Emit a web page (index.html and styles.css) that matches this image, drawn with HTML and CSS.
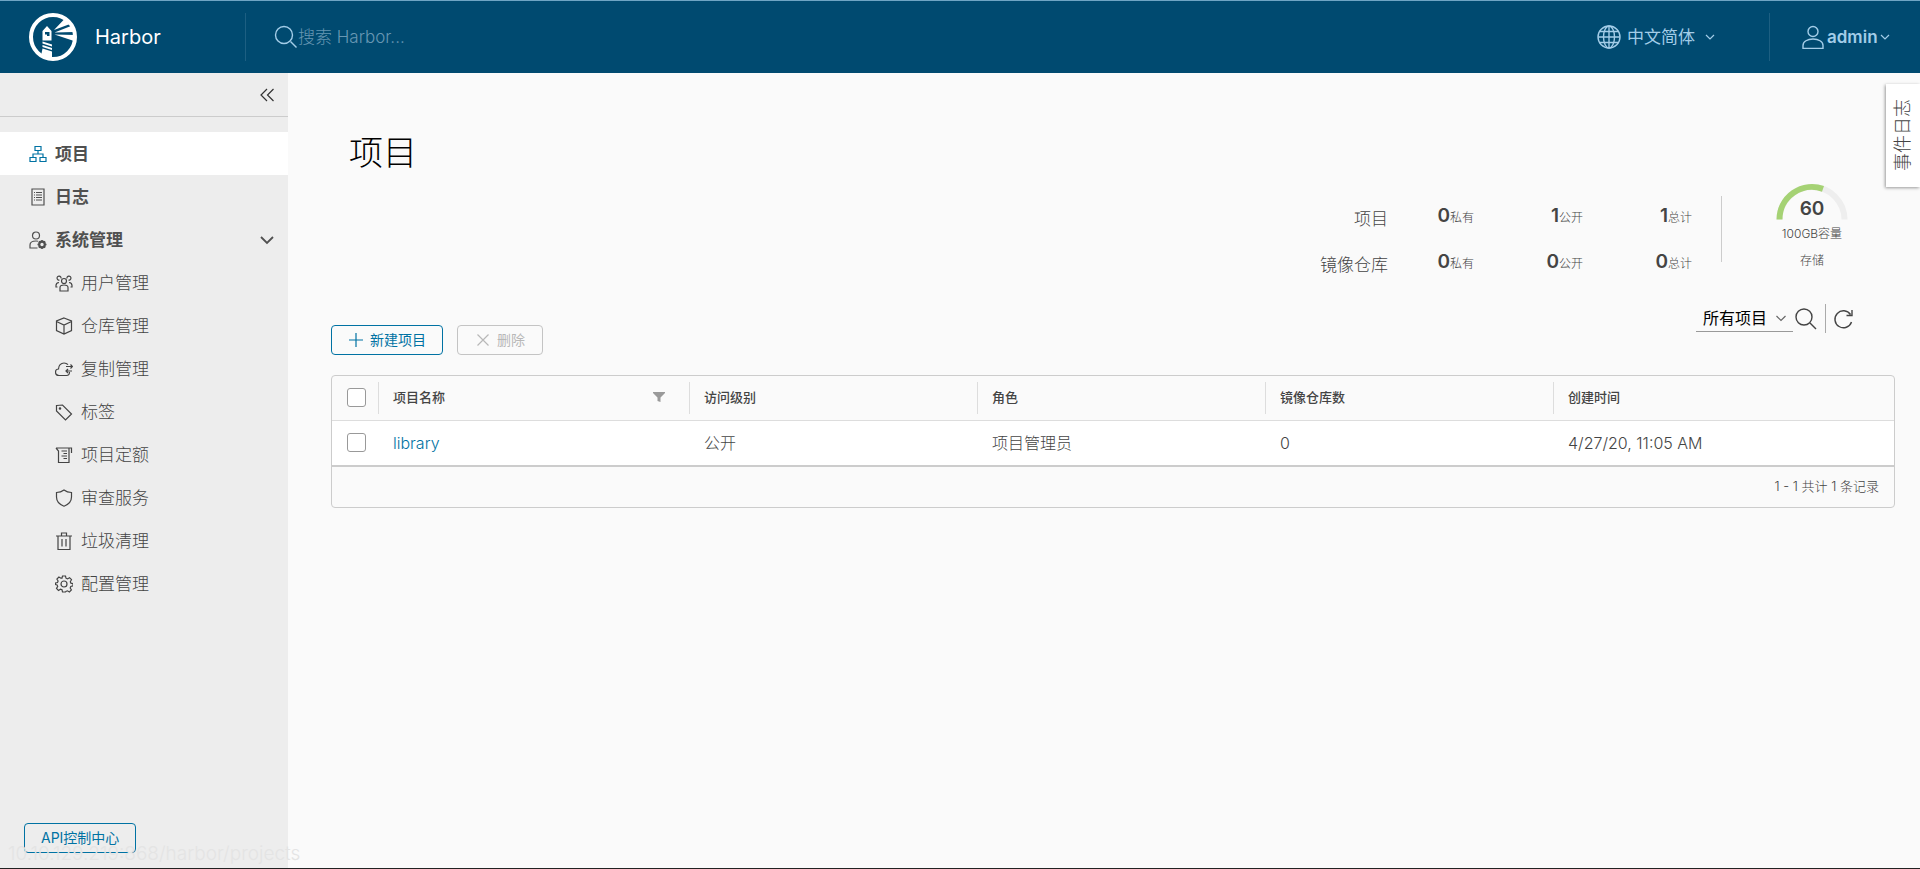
FILE: index.html
```html
<!DOCTYPE html>
<html lang="zh-CN">
<head>
<meta charset="utf-8">
<title>Harbor</title>
<link rel="stylesheet" href="styles.css">
</head>
<body>
<header class="topbar">
  <a class="brand" href="#">
    <svg class="logo" viewBox="0 0 48 48" aria-hidden="true">
      <circle cx="24" cy="24" r="22" fill="none" stroke="#fff" stroke-width="4"/>
      <path fill="#fff" d="M13.500 18l4.500-5 4.500 5v9.500h-9zM13.500 28.500l9.500 3v2l-9.500-3zM13.500 32l9.500 3v2l-9.500-3zM13.500 35.500l9.500 3V46l-11-3z"/>
      <path fill="#004a70" d="M16 19h4.500v4H18v-1.500h-2z"/>
      <path fill="#fff" d="M25 17L35 6.500l6 4.500zM25.500 19.500L42 13l3 6zM25.500 21.500L46 22l-1 6z"/>
    </svg>
    <span>Harbor</span>
  </a>
  <form class="search">
    <svg class="i24" viewBox="0 0 24 24" aria-hidden="true"><circle cx="10" cy="10" r="8.500"/><path d="M16.500 16.500l6 6"/></svg>
    <input type="text" aria-label="搜索" placeholder="搜索 Harbor...">
  </form>
  <button class="top-item lang">
    <svg class="i24" viewBox="0 0 24 24" aria-hidden="true"><circle cx="12" cy="12" r="11"/><ellipse cx="12" cy="12" rx="5.500" ry="11"/><path d="M12 1v22M1 12h22M3 6.500h18M3 17.500h18"/></svg>
    <span>中文简体</span>
    <svg class="caret" viewBox="0 0 10 10" aria-hidden="true"><path d="M1 3l4 4 4-4"/></svg>
  </button>
  <button class="top-item user">
    <svg class="i24" viewBox="0 0 24 24" aria-hidden="true"><circle cx="12" cy="6.500" r="5"/><path d="M2 23.500v-3c0-4 4.500-6.500 10-6.500s10 2.500 10 6.500v3z"/></svg>
    <b>admin</b>
    <svg class="caret" viewBox="0 0 10 10" aria-hidden="true"><path d="M1 3l4 4 4-4"/></svg>
  </button>
</header>
<div class="body">
  <nav class="side">
    <div class="collapse"><button aria-label="收起"><svg class="i18" viewBox="0 0 18 18" aria-hidden="true"><path d="M9 3L3 9l6 6M15.500 3l-6 6 6 6"/></svg></button></div>
    <ul class="menu">
      <li><a class="item active" href="#"><svg class="i18" viewBox="0 0 18 18" aria-hidden="true"><path d="M6 1.500h6v4H6zM1 12.500h6v4H1zM11 12.500h6v4h-6zM9 5.500V9M4 12.500V9h10v3.500"/></svg>项目</a></li>
      <li><a class="item" href="#"><svg class="i18" viewBox="0 0 18 18" aria-hidden="true"><path d="M3 1h12v16H3zM7 4.500h6M7 7h6M7 9.500h6M7 12h6M5 4.500h1M5 7h1M5 9.500h1M5 12h1"/></svg>日志</a></li>
      <li><a class="item" href="#"><svg class="i18" viewBox="0 0 18 18" aria-hidden="true"><circle cx="7" cy="4.500" r="3.500"/><path d="M8.500 17H1v-3c0-2.500 2.500-4 6-4 1 0 1.500 0 2 .2"/><circle cx="13" cy="13.500" r="2.800" stroke-width="2.200"/><path d="M13 9v1.500M13 16.500V18M8.500 13.500H10M16 13.500h1.500M9.900 10.400l1 1M15.100 15.600l1 1M16.100 10.400l-1 1M10.900 15.600l-1 1" stroke-width="1.600"/></svg><span class="grow">系统管理</span><svg class="i18 thick" viewBox="0 0 18 18" aria-hidden="true"><path d="M3 6l6 6 6-6"/></svg></a>
        <ul class="sub">
          <li><a href="#"><svg class="i18" viewBox="0 0 18 18" aria-hidden="true"><circle cx="9" cy="7" r="2.500"/><path d="M5 17v-3.500C5 11.500 6.500 11 9 11s4 .5 4 2.500V17zM6 4.500A2 2 0 1 0 4.500 6M12 4.500A2 2 0 1 1 13.500 6M4 8.500c-2 .2-3 1-3 3V13h1.500M14 8.500c2 .2 3 1 3 3V13h-1.500"/></svg>用户管理</a></li>
          <li><a href="#"><svg class="i18" viewBox="0 0 18 18" aria-hidden="true"><path d="M9 1l7.500 3v9.500L9 17l-7.500-3.500V4zM1.500 4.500L9 8l7.500-3.500M9 8v9"/></svg>仓库管理</a></li>
          <li><a href="#"><svg class="i18" viewBox="0 0 18 18" aria-hidden="true"><path d="M14.500 12c0 2-1 3.500-3 3.500H4C2 15.500.5 14 .5 12S2 9 3.500 9C3.500 5.500 6 3 9 3c1.500 0 3 .6 4 1.700M11 6.500h6.500M15.500 4.500l2 2-2 2M17 11h-6M13 9l-2 2 2 2"/></svg>复制管理</a></li>
          <li><a href="#"><svg class="i18" viewBox="0 0 18 18" aria-hidden="true"><path d="M1.500 2.500l6-.5 9 9-6 6-9-9z"/><circle cx="5" cy="5.500" r=".7"/></svg>标签</a></li>
          <li><a href="#"><svg class="i18" viewBox="0 0 18 18" aria-hidden="true"><path d="M1 2h15.500v5M1 2l2.500 3v11.500H14V2M6.500 5H12M8.500 7.500H12M6.500 10H12M8.500 12.500H12"/></svg>项目定额</a></li>
          <li><a href="#"><svg class="i18" viewBox="0 0 18 18" aria-hidden="true"><path d="M9 1c2.500 2 5 2.500 7.500 2.500V8c0 4.500-3 7.500-7.500 9.200C4.500 15.500 1.500 12.500 1.500 8V3.500C4 3.500 6.500 3 9 1z"/></svg>审查服务</a></li>
          <li><a href="#"><svg class="i18" viewBox="0 0 18 18" aria-hidden="true"><path d="M1 4h16M3 4v13.500h12V4M6.500 4V1h5v3M7 7v7.500M11 7v7.500"/></svg>垃圾清理</a></li>
          <li><a href="#"><svg class="i18" viewBox="0 0 18 18" aria-hidden="true"><circle cx="9" cy="9" r="3"/><path d="M7.500 1h3l.5 2.200 1.500.7 2-1.200 2 2-1.200 2 .6 1.500 2.100.5v2.200l-2.200.6-.6 1.500 1.200 2-2 2-2-1.200-1.500.6L10.500 17h-3L7 14.800l-1.500-.6-2 1.200-2-2 1.200-2-.6-1.500L.5 9.500V8l2-.5.6-1.500-1.200-2 2-2 2 1.200L7 3.200z"/></svg>配置管理</a></li>
        </ul>
      </li>
    </ul>
    <button class="btn api">API控制中心</button>
    <span class="status">10.10.129.219:868/harbor/projects</span>
  </nav>
  <main class="main">
    <h1>项目</h1>
    <section class="stats">
      <div class="counts">
        <span class="lab">项目</span><span><b>0</b>私有</span><span><b>1</b>公开</span><span><b>1</b>总计</span>
        <span class="lab">镜像仓库</span><span><b>0</b>私有</span><span><b>0</b>公开</span><span><b>0</b>总计</span>
      </div>
      <div class="quota">
        <div class="gauge">
          <svg viewBox="0 0 72 38" aria-hidden="true"><path d="M3.500 37.500a32.500 32.500 0 0 1 65 0" stroke="#eee"/><path d="M3.500 37.500A32.500 32.500 0 0 1 47 6.900" stroke="#a5d274"/></svg>
          <b>60</b>
        </div>
        <span>100GB容量</span>
        <span>存储</span>
      </div>
    </section>
    <div class="tools">
      <div class="actions">
        <button class="btn"><svg class="i16" viewBox="0 0 16 16" aria-hidden="true"><path d="M8 1v14M1 8h14"/></svg>新建项目</button>
        <button class="btn" disabled><svg class="i16" viewBox="0 0 16 16" aria-hidden="true"><path d="M2.500 2.500l11 11M13.500 2.500l-11 11"/></svg>删除</button>
      </div>
      <div class="filters">
        <span class="pick"><select aria-label="项目范围"><option>所有项目</option></select><svg class="caret" viewBox="0 0 10 10" aria-hidden="true"><path d="M.5 3L5 7.500 9.500 3"/></svg></span>
        <button aria-label="搜索"><svg class="i24" viewBox="0 0 24 24" aria-hidden="true"><circle cx="10" cy="10" r="8"/><path d="M16 16l6 6"/></svg></button>
        <button class="refresh" aria-label="刷新"><svg class="i24" viewBox="0 0 24 24" aria-hidden="true"><path d="M19.500 15a8.500 8.500 0 1 1-1-7.500M20 3v5.500h-5.500"/></svg></button>
      </div>
    </div>
    <div class="grid">
      <table>
        <thead><tr>
          <th class="c0"><input type="checkbox" aria-label="全选"></th>
          <th class="c1"><div>项目名称<svg class="i12" viewBox="0 0 12 12" aria-hidden="true"><path d="M0 1h12v1L7.500 6.500V11l-3-1V6.500L0 2z"/></svg></div></th>
          <th class="c2"><div>访问级别</div></th><th class="c2"><div>角色</div></th><th class="c2"><div>镜像仓库数</div></th><th><div>创建时间</div></th>
        </tr></thead>
        <tbody><tr>
          <td class="c0"><input type="checkbox" aria-label="选择 library"></td>
          <td><a href="#">library</a></td><td>公开</td><td>项目管理员</td><td>0</td><td>4/27/20, 11:05 AM</td>
        </tr></tbody>
      </table>
      <div class="foot">1 - 1 共计 1 条记录</div>
    </div>
    <button class="events">事件日志</button>
  </main>
</div>
</body>
</html>
```
FILE: styles.css
```css
* { box-sizing: border-box; }
body {
  margin: 0;
  min-height: 100vh;
  display: flex;
  flex-direction: column;
  font: 300 16px/24px Inter, "Noto Sans CJK SC", sans-serif;
  color: #444;
  background: #fafafa;
  border-bottom: 1px solid #222;
}
button, input, select { font: inherit; color: inherit; background: none; border: 0; padding: 0; margin: 0; }
a { color: inherit; text-decoration: none; }
ul { list-style: none; margin: 0; padding: 0; }
svg { flex: none; fill: none; stroke: currentColor; stroke-width: 1.2; }
.i24 { width: 24px; height: 24px; stroke-width: 1.4; }
.i18 { width: 18px; height: 18px; }
.i16 { width: 16px; height: 16px; }
.i12 { width: 12px; height: 12px; fill: #9a9a9a; stroke: none; }
.caret { width: 10px; height: 10px; }

.topbar {
  display: flex;
  align-items: center;
  height: 73px;
  background: #004a70;
  border-top: 1px solid #6fa5c4;
  color: #a3cde8;
  font-size: 17px;
  font-weight: 400;
}
.brand { display: flex; align-items: center; gap: 18px; width: 245px; padding-left: 29px; color: #fff; font-size: 20px; }
.logo { width: 48px; height: 48px; stroke: none; }
.search { flex: 1; display: flex; align-items: center; height: 48px; padding-left: 28px; border-left: 1px solid #1d5f82; }
.search input { flex: 1; outline: 0; font-weight: 300; }
.search input::placeholder { color: #6797b3; opacity: 1; }
.top-item { display: flex; align-items: center; height: 48px; }
.lang { width: 172px; gap: 6px; }
.lang .caret { margin-left: 4px; }
.user { width: 151px; padding-left: 31px; border-left: 1px solid #1d5f82; gap: 2px; }
.user b { font-weight: 600; }

.body { flex: 1; display: flex; }
.side { position: relative; width: 288px; display: flex; flex-direction: column; background: #ededed; }
.collapse { display: flex; justify-content: flex-end; align-items: center; height: 44px; padding-right: 12px; border-bottom: 1px solid #ccc; color: #333; }
.collapse button { display: flex; }
.menu { flex: 1; padding-top: 15px; font-size: 17px; }
.item, .sub a { display: flex; align-items: center; height: 43px; gap: 8px; }
.item { padding: 0 12px 0 29px; font-weight: 700; color: #505050; }
.item.active { background: #fff; }
.active svg { color: #0072a3; }
.sub a { padding-left: 55px; }
.grow { flex: 1; }
.thick { stroke-width: 1.8; }
.btn {
  display: inline-flex;
  align-items: center;
  justify-content: center;
  gap: 6px;
  height: 30px;
  padding: 0 16px;
  border: 1px solid #0072a3;
  border-radius: 4px;
  color: #0072a3;
  font-size: 14px;
  font-weight: 400;
}
.btn:disabled { padding: 0 17px; color: #b8b8b8; border-color: #c4c4c4; }
.api { align-self: flex-start; margin: 0 0 15px 24px; }
.status { position: absolute; left: 8px; bottom: 2px; color: #e4e4e4; font-size: 19px; white-space: nowrap; z-index: 1; }

.main { position: relative; flex: 1; min-width: 0; padding: 56px 25px 0 43px; }
h1 { margin: 0 0 0 18px; font-size: 34px; line-height: 48px; font-weight: 300; color: #000; }
.stats { display: flex; justify-content: flex-end; height: 96px; padding-right: 35px; }
.counts { display: grid; grid-template-columns: 80px 86px 109px 109px; grid-auto-rows: 42px; row-gap: 4px; align-items: center; text-align: right; height: 66px; margin-top: 19px; padding-right: 29px; border-right: 1px solid #ccc; font-size: 12px; }
.counts .lab { font-size: 17px; padding-top: 4px; }
.counts b { font-size: 19px; font-weight: 600; }
.quota { width: 138px; padding: 5px 0 0 42px; display: flex; flex-direction: column; align-items: center; font-size: 12px; }
.gauge { display: grid; justify-items: center; align-items: end; }
.gauge svg, .gauge b { grid-area: 1 / 1; }
.gauge svg { width: 72px; height: 38px; stroke-width: 6; }
.gauge b { font-size: 19px; font-weight: 600; line-height: 22px; }
.quota > span { line-height: 27px; }
.tools { display: flex; justify-content: space-between; height: 102px; padding-top: 31px; }
.actions { display: flex; gap: 14px; padding-top: 21px; }
.filters { display: flex; align-items: flex-start; height: 29px; padding-right: 39px; }
.filters button { display: flex; align-items: center; height: 29px; padding: 0 3px 0 1px; }
.pick { display: flex; align-items: center; width: 97px; height: 28px; padding: 0 7px; border-bottom: 1px solid #999; color: #000; }
.pick select { flex: 1; appearance: none; font-weight: 400; }
.pick .caret { color: #666; }
.filters .refresh { margin-left: 4px; padding: 0 0 0 6px; border-left: 1px solid #aaa; }

.grid { border: 1px solid #ccc; border-radius: 4px; overflow: hidden; }
table { width: 100%; border-collapse: collapse; table-layout: fixed; }
th { height: 44px; padding: 0; text-align: left; font-size: 13px; font-weight: 500; }
th div { display: flex; align-items: center; justify-content: space-between; height: 32px; padding: 0 24px 2px 14px; border-left: 1px solid #ddd; }
th.c0 { width: 46px; }
th.c1 { width: 311px; }
th.c2 { width: 288px; }
td { height: 46px; padding: 0 15px; background: #fff; border-top: 1px solid #ddd; border-bottom: 2px solid #ccc; }
td a { color: #0072a3; }
.grid .c0 { padding: 0 0 0 15px; }
input[type=checkbox] { appearance: none; display: block; width: 19px; height: 19px; border: 1px solid #999; border-radius: 3px; background: #fff; }
.foot { height: 40px; padding: 0 15px; line-height: 39px; text-align: right; font-size: 13px; }
.events {
  position: absolute;
  top: 11px;
  right: 0;
  width: 34px;
  height: 103px;
  background: #fff;
  box-shadow: 1px -1px 3px #999;
  writing-mode: vertical-rl;
  text-orientation: sideways;
  transform: rotate(180deg);
  font-size: 18px;
}
```
